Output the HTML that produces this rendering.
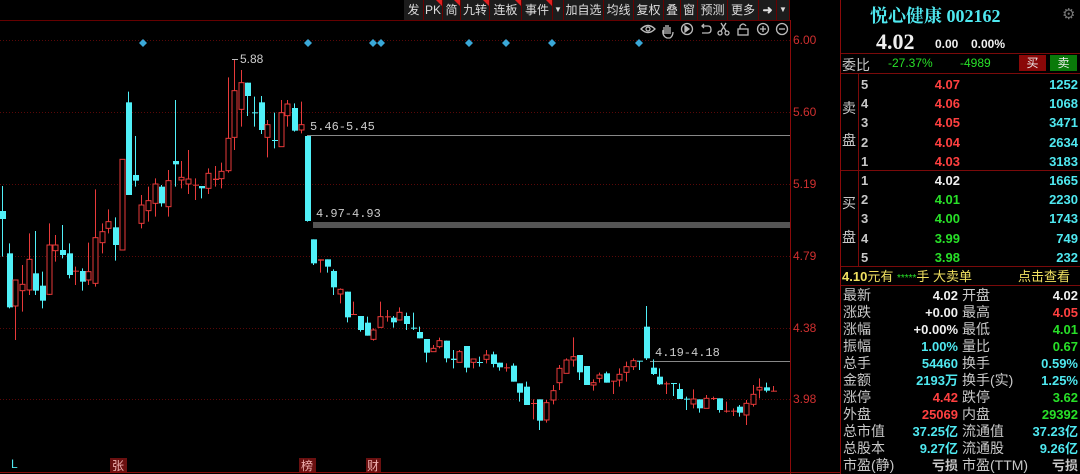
<!DOCTYPE html>
<html><head><meta charset="utf-8"><style>
*{margin:0;padding:0;box-sizing:border-box}
body{width:1080px;height:474px;background:#000;overflow:hidden;position:relative;font-family:"Liberation Sans","Noto Sans CJK SC",sans-serif;color:#ccc}
.a{position:absolute;white-space:nowrap}
.tb{position:absolute;top:0;height:20px;font-size:12px;line-height:20px;color:#ddd;background:#1c1c1c;text-align:center;border-right:1px solid #600}
.tri::after{content:"";position:absolute;right:0;top:0;border-top:6px solid #e02020;border-left:6px solid transparent}
.cy{color:#4fe8f0}.rd{color:#ff4040}.gr{color:#28e028}.wh{color:#f0f0f0}.yl{color:#f0e060}.lb{color:#c8c8c8}
.hl{position:absolute;height:1px;background:#7a0a0a}
.r{font-size:13px;font-weight:bold;line-height:17px}
.l{font-size:14px;line-height:17px}
</style></head><body>
<svg class="a" style="left:0;top:0" width="1080" height="474" id="s">
<g stroke="#5a0808" stroke-dasharray="1,2" stroke-width="1">
<line x1="0" y1="40.5" x2="790" y2="40.5"/><line x1="0" y1="112.5" x2="790" y2="112.5"/><line x1="0" y1="184.5" x2="790" y2="184.5"/><line x1="0" y1="256.5" x2="790" y2="256.5"/><line x1="0" y1="328.5" x2="790" y2="328.5"/><line x1="0" y1="399.5" x2="790" y2="399.5"/>
</g>
<line x1="790.5" y1="20" x2="790.5" y2="474" stroke="#8a0a0a"/>
<line x1="840.5" y1="0" x2="840.5" y2="474" stroke="#8a0a0a"/>
<line x1="0" y1="472.5" x2="840" y2="472.5" stroke="#8a0a0a"/>
<line x1="0" y1="20.5" x2="790" y2="20.5" stroke="#600"/>
<line x1="307" y1="135.5" x2="790" y2="135.5" stroke="#888"/>
<rect x="313" y="222" width="477" height="6" fill="#555"/>
<line x1="650" y1="361.5" x2="790" y2="361.5" stroke="#888"/>
<line x1="232" y1="59.5" x2="238" y2="59.5" stroke="#bbb"/>
<g fill="#3aa8d8">
<path d="M143 39l4 4-4 4-4-4z"/><path d="M308 39l4 4-4 4-4-4z"/><path d="M373 39l4 4-4 4-4-4z"/><path d="M381 39l4 4-4 4-4-4z"/><path d="M469 39l4 4-4 4-4-4z"/><path d="M506 39l4 4-4 4-4-4z"/><path d="M552 39l4 4-4 4-4-4z"/><path d="M639 39l4 4-4 4-4-4z"/>
</g>
<g stroke="#bbb" fill="none" stroke-width="1.3">
<path d="M641 29q7-7 14 0q-7 7-14 0z"/><circle cx="648" cy="29" r="2"/>
<path d="M664 34v-7m2 7v-9m2 9v-9m2 9v-7m-7 3q-1 6 4 8h3q3-2 3-6"/>
<circle cx="687" cy="29" r="5.5"/><path d="M685 26l4 3-4 3z" fill="#bbb"/>
<path d="M702 26h6q3 0 3 3.5t-3 3.5h-6m2-9l-2 2 2 2"/>
<circle cx="720" cy="33" r="2"/><circle cx="727" cy="33" r="2"/><path d="M721 31l5-8m0 8l-5-8"/>
<rect x="738" y="29" width="10" height="6"/><path d="M740 29v-3q3-4 6 0"/>
<circle cx="763" cy="29" r="5.5"/><path d="M760 29h6m-3-3v6"/>
<circle cx="782" cy="29" r="5.5"/><path d="M779 29h6"/>
</g>
<g id="c"></g>
<rect x="110" y="458" width="17" height="14" fill="#6a1010"/><rect x="299" y="458" width="17" height="14" fill="#6a1010"/><rect x="366" y="458" width="15" height="14" fill="#6a1010"/>
</svg>
<!-- toolbar -->
<div class="tb" style="left:404px;width:20px">发</div>
<div class="tb tri" style="left:424px;width:19px">PK</div>
<div class="tb tri" style="left:443px;width:18px">简</div>
<div class="tb tri" style="left:461px;width:29px">九转</div>
<div class="tb tri" style="left:490px;width:32px">连板</div>
<div class="tb tri" style="left:522px;width:31px">事件</div>
<div class="tb" style="left:553px;width:11px;font-size:8px">▼</div>
<div class="tb" style="left:564px;width:40px">加自选</div>
<div class="tb" style="left:604px;width:30px">均线</div>
<div class="tb" style="left:634px;width:30px">复权</div>
<div class="tb" style="left:664px;width:17px">叠</div>
<div class="tb" style="left:681px;width:17px">窗</div>
<div class="tb" style="left:698px;width:30px">预测</div>
<div class="tb" style="left:728px;width:31px">更多</div>
<div class="tb" style="left:759px;width:18px;font-weight:bold">➜</div>
<div class="tb" style="left:777px;width:13px;font-size:8px">▼</div>
<!-- chart labels -->
<div class="a" style="left:240px;top:52px;font-size:12px;color:#ccc">5.88</div>
<div class="a" style="left:310px;top:120px;font-size:12px;color:#ccc;font-family:'Liberation Mono',monospace">5.46-5.45</div>
<div class="a" style="left:316px;top:207px;font-size:12px;color:#ccc;font-family:'Liberation Mono',monospace">4.97-4.93</div>
<div class="a" style="left:655px;top:346px;font-size:12px;color:#ccc;font-family:'Liberation Mono',monospace">4.19-4.18</div>
<div class="a cy" style="left:11px;top:457px;font-size:12px">L</div>
<div class="a" style="left:112px;top:457px;font-size:12px;color:#f0b0b0">张</div>
<div class="a" style="left:301px;top:457px;font-size:12px;color:#f0b0b0">榜</div>
<div class="a" style="left:367px;top:457px;font-size:12px;color:#f0b0b0">财</div>
<div class="a" style="left:793px;top:33px;font-size:12px;color:#d03030">6.00</div>
<div class="a" style="left:793px;top:105px;font-size:12px;color:#d03030">5.60</div>
<div class="a" style="left:793px;top:177px;font-size:12px;color:#d03030">5.19</div>
<div class="a" style="left:793px;top:249px;font-size:12px;color:#d03030">4.79</div>
<div class="a" style="left:793px;top:321px;font-size:12px;color:#d03030">4.38</div>
<div class="a" style="left:793px;top:392px;font-size:12px;color:#d03030">3.98</div>
<!-- right panel -->
<div class="a cy" style="left:870px;top:2px;font-size:18px;font-weight:bold;font-family:'Liberation Serif','Noto Serif CJK SC',serif">悦心健康 002162</div>
<div class="a" style="left:1062px;top:5px;font-size:15px;color:#777">⚙</div>
<div class="a wh" style="left:876px;top:29px;font-size:22px;font-weight:bold;font-family:'Liberation Serif',serif">4.02</div>
<div class="a wh" style="left:935px;top:37px;font-size:12px;font-weight:bold">0.00</div>
<div class="a wh" style="left:971px;top:37px;font-size:12px;font-weight:bold">0.00%</div>
<div class="hl" style="left:841px;top:53px;width:239px"></div>
<div class="a lb" style="left:842px;top:55px;font-size:14px">委比</div>
<div class="a gr" style="left:888px;top:56px;font-size:12px">-27.37%</div>
<div class="a gr" style="left:960px;top:56px;font-size:12px">-4989</div>
<div class="a" style="left:1019px;top:55px;width:27px;height:16px;background:#8a0808;color:#eee;font-size:12px;text-align:center;line-height:16px">买</div>
<div class="a" style="left:1050px;top:55px;width:27px;height:16px;background:#0a7a0a;color:#eee;font-size:12px;text-align:center;line-height:16px">卖</div>
<div class="hl" style="left:841px;top:73px;width:239px"></div>
<div class="a" style="left:858px;top:73px;width:1px;height:193px;background:#7a0a0a"></div>
<div class="hl" style="left:841px;top:170px;width:239px"></div>
<div class="hl" style="left:841px;top:266px;width:239px"></div>
<div class="hl" style="left:841px;top:285px;width:239px"></div>
<div class="a lb" style="left:842px;top:98px;font-size:14px">卖</div>
<div class="a lb" style="left:842px;top:130px;font-size:14px">盘</div>
<div class="a lb" style="left:842px;top:193px;font-size:14px">买</div>
<div class="a lb" style="left:842px;top:227px;font-size:14px">盘</div>
<div id="ob"></div>
<div class="a" style="left:842px;top:268px;font-size:13px;line-height:17px"><span class="yl" style="font-weight:bold">4.10</span><span class="yl">元有 </span><span class="gr" style="font-size:10px">*****</span><span class="yl">手 大卖单</span></div>
<div class="a yl" style="left:1018px;top:268px;font-size:13px;line-height:17px">点击查看</div>
<div id="st"></div>
<script>
var z4=[[7,0,483,507,408,620],[27,0,610,772,580,775],[46,1,690,768,690,870],[67,1,703,722,645,785],[86,1,628,720,550,735],[106,0,670,722,543,735],[126,0,707,752,665,775],[146,1,585,733,520,735],[166,1,585,602,555,635],[186,0,600,615,525,625],[206,0,610,675,580,685],[226,1,662,665,650,705],[245,0,663,695,655,722],[265,1,665,690,578,705],[286,1,563,700,418,710],[305,1,545,578,520,610],[325,1,515,535,478,550],[345,0,532,585,502,632],[365,1,328,600,328,600],[384,0,157,435,125,435],[404,0,375,392,258,410],[424,1,465,520,435,535],[444,1,452,482,410,515],[464,1,402,460,385,500],[484,0,410,460,405,470],[504,1,392,470,360,500],[524,0,333,343,150,410],[544,1,382,390,333,415],[564,1,387,402,300,432],[584,1,404,406,385,450],[604,0,408,415,408,445],[624,1,370,415,355,432],[644,1,386,390,348,410],[663,1,364,386,338,415],[683,1,265,362,82,368],[703,1,122,262,30,300],[723,1,98,178,60,230],[742,0,98,138,98,198],[762,0,187,190,140,230],[782,0,157,240,138,252],[802,1,224,262,210,322],[822,0,270,272,188,295],[842,1,188,290,150,290],[862,1,162,197,150,230],[882,0,174,242,160,245],[902,1,224,240,155,250],[921,0,258,513,258,515]];
var z5=[[40,0,118,190,118,195],[60,1,178,182,178,218],[80,0,178,200,178,218],[100,0,213,262,208,285],[120,1,268,282,265,310],[140,0,275,352,275,367],[160,1,342,344,305,345],[180,0,348,390,348,395],[200,0,368,407,350,407],[220,1,390,418,385,422],[240,1,350,382,305,382],[260,1,349,352,330,365],[280,0,353,367,348,383],[298,1,337,360,322,360],[318,0,348,372,338,390],[340,0,383,385,338,390],[358,0,396,415,380,415],[378,0,417,458,417,487],[398,1,445,455,435,455],[418,1,422,440,413,445],[438,0,422,475,422,487],[458,0,476,480,450,505],[478,1,455,487,450,487],[498,0,438,503,438,517],[518,1,477,487,477,505],[538,0,486,488,470,500],[558,1,465,478,450,490],[578,0,463,492,455,502],[598,0,488,502,488,512],[618,1,502,504,490,515],[638,0,497,545,490,545],[658,0,550,578,550,605],[678,0,560,615,545,615],[698,1,609,611,598,658],[718,0,598,662,598,690],[738,1,608,660,600,668],[758,1,572,600,555,613],[778,1,505,548,495,570],[798,1,480,520,475,520],[818,1,470,480,412,500],[838,0,465,517,465,540],[858,0,498,555,498,555],[878,1,548,555,538,572],[898,1,525,535,518,548],[918,0,520,548,515,548],[938,1,542,544,543,582],[958,1,523,540,505,560],[978,1,500,517,485,545],[998,1,482,500,475,510],[1018,0,482,484,483,510],[1038,0,380,475,318,480],[1058,0,503,522,478,525],[1078,0,530,553,505,555],[1098,1,550,552,545,582],[1118,0,549,551,550,588],[1138,0,567,597,550,597],[1158,0,596,598,590,630],[1178,1,597,612,568,625],[1198,0,598,625,598,638],[1218,1,595,625,585,625],[1238,1,594,596,590,600],[1258,0,595,630,595,638],[1278,1,632,634,605,638],[1298,1,632,634,625,648],[1318,0,620,638,615,650],[1338,1,610,645,600,675],[1358,1,583,613,555,620],[1378,1,562,570,535,595],[1398,0,562,572,548,577],[1418,1,572,574,558,575]];
var h='';
function add(d,ox,oy){d.forEach(function(c){var x=Math.round(ox+c[0]/3),bt=oy+c[2]/3,bb=oy+c[3]/3,wt=oy+c[4]/3,wb=oy+c[5]/3;var col=c[1]?'#e83a3a':'#50f0f8';var bh=Math.max(1,bb-bt);
h+='<line x1="'+(x+.5)+'" y1="'+wt+'" x2="'+(x+.5)+'" y2="'+wb+'" stroke="'+col+'"/>';
if(c[1]&&bh>2)h+='<rect x="'+(x-2)+'" y="'+bt+'" width="5" height="'+bh+'" fill="#000" stroke="'+col+'"/>';
else h+='<rect x="'+(x-2)+'" y="'+bt+'" width="6" height="'+bh+'" fill="'+col+'"/>';});}
add(z4,0,50);add(z5,300,200);
document.getElementById('c').innerHTML=h;
var ob=[['5','4.07','1252','rd'],['4','4.06','1068','rd'],['3','4.05','3471','rd'],['2','4.04','2634','rd'],['1','4.03','3183','rd'],['1','4.02','1665','wh'],['2','4.01','2230','gr'],['3','4.00','1743','gr'],['4','3.99','749','gr'],['5','3.98','232','gr']];
var ys=[76,95,114,134,153,172,191,210,230,249],o='';
ob.forEach(function(r,i){var y=ys[i];o+='<div class="a lb r" style="left:861px;top:'+y+'px">'+r[0]+'</div><div class="a r '+r[3]+'" style="left:900px;width:60px;text-align:right;top:'+y+'px">'+r[1]+'</div><div class="a r cy" style="left:1000px;width:78px;text-align:right;top:'+y+'px">'+r[2]+'</div>';});
document.getElementById('ob').innerHTML=o;
var st=[['最新','4.02','wh','开盘','4.02','wh'],['涨跌','+0.00','wh','最高','4.05','rd'],['涨幅','+0.00%','wh','最低','4.01','gr'],['振幅','1.00%','cy','量比','0.67','gr'],['总手','54460','cy','换手','0.59%','cy'],['金额','2193万','cy','换手(实)','1.25%','cy'],['涨停','4.42','rd','跌停','3.62','gr'],['外盘','25069','rd','内盘','29392','gr'],['总市值','37.25亿','cy','流通值','37.23亿','cy'],['总股本','9.27亿','cy','流通股','9.26亿','cy'],['市盈(静)','亏损','lb','市盈(TTM)','亏损','lb']];
o='';st.forEach(function(r,i){var y=287+i*17;o+='<div class="a lb l" style="left:843px;top:'+y+'px">'+r[0]+'</div><div class="a r '+r[2]+'" style="left:880px;width:78px;text-align:right;top:'+y+'px">'+r[1]+'</div><div class="a lb l" style="left:962px;top:'+y+'px">'+r[3]+'</div><div class="a r '+r[5]+'" style="left:1000px;width:78px;text-align:right;top:'+y+'px">'+r[4]+'</div>';});
document.getElementById('st').innerHTML=o;
</script>
</body></html>
